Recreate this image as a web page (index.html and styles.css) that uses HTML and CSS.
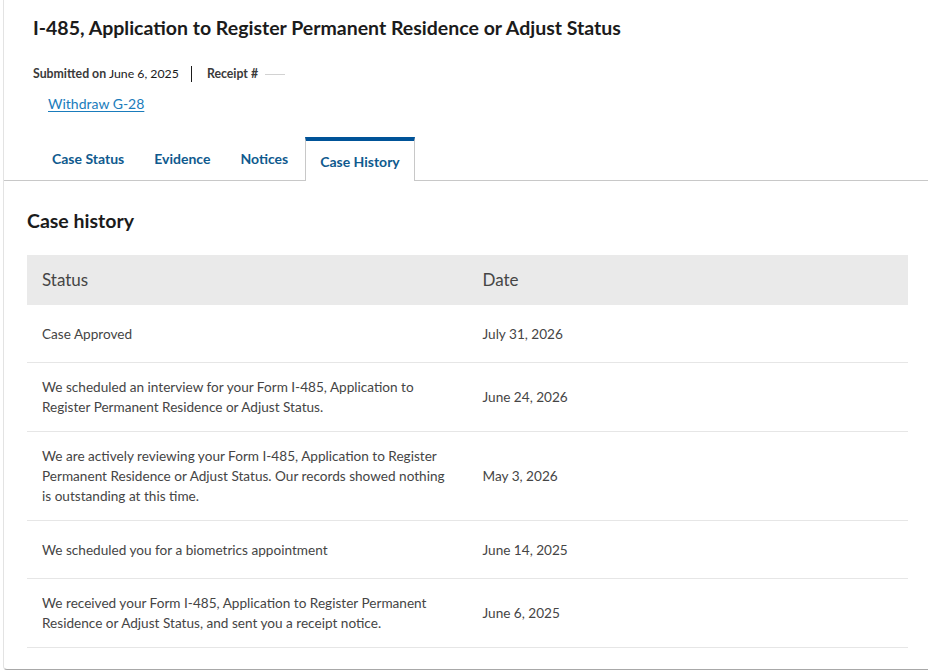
FILE: index.html
```html
<!DOCTYPE html>
<html lang="en">
<head>
<meta charset="utf-8">
<title>Case History – I-485</title>
<link rel="stylesheet" href="styles.css">
</head>
<body>
<main class="case-card">
  <header class="case-header">
    <h1 class="case-title">I-485, Application to Register Permanent Residence or Adjust Status</h1>
    <div class="case-meta">
      <span class="meta-item"><strong>Submitted on</strong> June 6, 2025</span>
      <span class="meta-divider"></span>
      <span class="meta-item"><strong>Receipt #</strong></span>
      <span class="receipt-value"></span>
    </div>
    <a class="withdraw-link" href="#">Withdraw G-28</a>
  </header>

  <nav class="tabs">
    <a class="tab" href="#">Case Status</a>
    <a class="tab" href="#">Evidence</a>
    <a class="tab" href="#">Notices</a>
    <a class="tab tab-active" href="#">Case History</a>
  </nav>

  <section class="history">
    <h2 class="history-title">Case history</h2>
    <table class="history-table">
      <thead>
        <tr><th>Status</th><th>Date</th></tr>
      </thead>
      <tbody>
        <tr class="row-single"><td>Case Approved</td><td>July 31, 2026</td></tr>
        <tr><td>We scheduled an interview for your Form I-485, Application to Register Permanent Residence or Adjust Status.</td><td>June 24, 2026</td></tr>
        <tr><td>We are actively reviewing your Form I-485, Application to Register Permanent Residence or Adjust Status. Our records showed nothing is outstanding at this time.</td><td>May 3, 2026</td></tr>
        <tr class="row-single"><td>We scheduled you for a biometrics appointment</td><td>June 14, 2025</td></tr>
        <tr><td>We received your Form I-485, Application to Register Permanent Residence or Adjust Status, and sent you a receipt notice.</td><td>June 6, 2025</td></tr>
      </tbody>
    </table>
  </section>
</main>
</body>
</html>
```

FILE: styles.css
```css
html, body {
  margin: 0;
  padding: 0;
  background: #ffffff;
  overflow: hidden;
}

body {
  font-family: "Lato", "Noto Sans", sans-serif;
  color: #1b1b1b;
}

.case-card {
  margin: 0 -12px 0 3px;
  border-left: 1px solid #e3e3e3;
  border-bottom: 1px solid #a8a8a8;
  border-bottom-left-radius: 4px;
  padding-bottom: 21px;
  background: #fff;
}

/* ---- header ---- */
.case-header {
  padding: 14px 0 0 29px;
}

.case-title {
  margin: 0;
  font-size: 19.5px;
  line-height: 28px;
  font-weight: 700;
  color: #1b1b1b;
}

.case-meta {
  display: flex;
  align-items: center;
  margin-top: 23px;
  font-size: 12.3px;
  line-height: 18px;
  color: #1b1b1b;
}

.case-meta strong {
  font-weight: 700;
  color: #3a3a3a;
}

.meta-divider {
  width: 1px;
  height: 16px;
  background: #1b1b1b;
  margin: 0 15px 0 12px;
}

.receipt-value {
  display: inline-block;
  width: 20px;
  height: 1px;
  margin-left: 7px;
  background: #d2d2d2;
}

.withdraw-link {
  display: inline-block;
  margin: 11px 0 0 15px;
  font-size: 14px;
  line-height: 20px;
  color: #1a7cbc;
  text-decoration: underline;
  text-underline-offset: 2px;
}

/* ---- tabs ---- */
.tabs {
  display: flex;
  align-items: flex-end;
  margin-top: 22px;
  padding-left: 33px;
  border-bottom: 1px solid #c8c8c8;
  height: 44px;
}

.tab {
  display: block;
  padding: 0 15px 13px;
  font-size: 14px;
  line-height: 17px;
  font-weight: 700;
  color: #0f5a8e;
  text-decoration: none;
}

.tab-active {
  position: relative;
  top: 1px;
  margin-left: 2px;
  height: 44px;
  box-sizing: border-box;
  padding: 12px 14px 0;
  border: 1px solid #c8c8c8;
  border-top: 4px solid #005398;
  border-bottom: none;
  background: #fff;
}

/* ---- history table ---- */
.history {
  padding: 28px 19px 0 23px;
}

.history-title {
  margin: 0 0 22px;
  font-size: 19.5px;
  line-height: 24px;
  font-weight: 700;
  color: #1b1b1b;
}

.history-table {
  width: 881px;
  border-collapse: collapse;
  table-layout: fixed;
  font-size: 13.6px;
  line-height: 20px;
  color: #454545;
}

.history-table th {
  background: #eaeaea;
  height: 50px;
  padding: 0 15px;
  text-align: left;
  font-size: 17px;
  font-weight: 400;
  color: #454545;
}

.history-table td {
  padding: 14px 15px;
  border-bottom: 1px solid #e6e6e6;
  vertical-align: middle;
}

.row-single td {
  height: 29px;
}
```
